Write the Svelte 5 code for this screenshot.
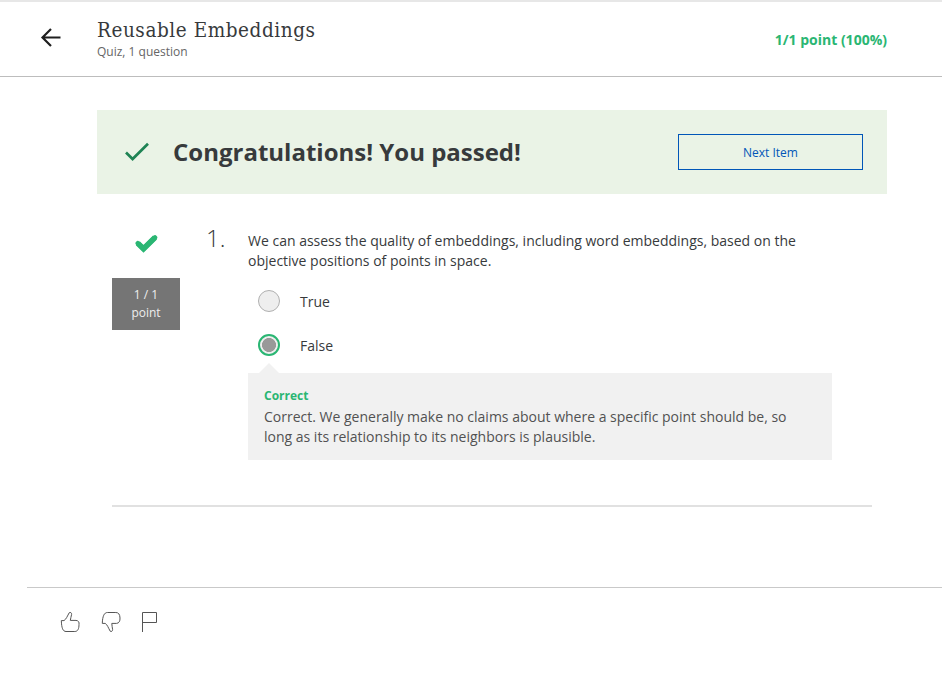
<script>
  const options = [
    { label: 'True', checked: false },
    { label: 'False', checked: true }
  ];
</script>

<div class="page">
  <header>
    <svg class="back" width="22" height="22" viewBox="0 0 22 22" aria-label="Back">
      <path d="M11 3 2.5 11.5 11 20M3 11.5H20.5" fill="none" stroke="#1f1f1f" stroke-width="2.2" />
    </svg>
    <div class="heading">
      <h1>Reusable Embeddings</h1>
      <p>Quiz, 1 question</p>
    </div>
    <strong class="score">1/1 point (100%)</strong>
  </header>

  <section class="banner">
    <svg width="26" height="22" viewBox="0 0 26 22">
      <path d="M2 11.5 8.6 18 24 2.8" fill="none" stroke="#1f8354" stroke-width="2.7" />
    </svg>
    <h2>Congratulations! You passed!</h2>
    <button>Next Item</button>
  </section>

  <section class="question">
    <div class="grade">
      <svg width="24" height="20" viewBox="0 0 24 20">
        <path d="M3.8 10.3 9.5 15.8 21 4.5" fill="none" stroke="#2ab673" stroke-width="5.6" />
        <path d="M3.8 10.3 9.5 15.8 21 4.5" fill="none" stroke="#2ab673" stroke-width="4.6" stroke-linejoin="round" stroke-linecap="round" />
      </svg>
      <div class="points">1 / 1<br />point</div>
    </div>
    <div class="number">1.</div>
    <div class="body">
      <p class="prompt">We can assess the quality of embeddings, including word embeddings, based on the<br />objective positions of points in space.</p>
      {#each options as option}
        <div class="option">
          <span class="radio" class:checked={option.checked}></span>
          <span class="label">{option.label}</span>
        </div>
      {/each}
      <div class="feedback">
        <strong>Correct</strong>
        <p>Correct. We generally make no claims about where a specific point should be, so<br />long as its relationship to its neighbors is plausible.</p>
      </div>
    </div>
  </section>

  <footer>
    <svg width="20" height="22" viewBox="0 0 20 22">
      <path d="M1.3 9.6H4C6 8.6 7.6 4.6 9.2 1.8C10.2 .8 11.7 1.6 11.6 3.4C11.4 5.6 10.3 7.6 10.3 9.4H16C18.4 9.6 19.4 11.2 19 13.4C19 17.8 17.8 20.5 14.8 20.5H6C2.8 20.5 1.6 16.8 1.3 9.6Z" />
    </svg>
    <svg width="20" height="22" viewBox="0 0 20 22">
      <path d="M1.3 12.4H4.2C6.2 13.4 7.4 17 9.2 20.2C10.2 21 11.7 20.2 11.6 18.6C11.6 16.4 10.6 14.6 10.8 12.4H15.5C18 12.2 19.2 10.2 19 7C18.9 3.2 17.4 1.5 14.8 1.5H6.4C3.2 1.5 1.5 5.2 1.3 12.4Z" />
    </svg>
    <svg width="18" height="22" viewBox="0 0 18 22">
      <path d="M2.5 21V1.5H16.5V11.5H2.5" />
    </svg>
  </footer>
</div>

<style>
  :global(body) {
    background: #fff;
  }
  .page {
    box-sizing: border-box;
    height: 676px;
    overflow: hidden;
    font: 14px/20px "Open Sans", sans-serif;
    color: #373a3c;
  }
  h1, h2, p {
    margin: 0;
  }
  header {
    box-sizing: border-box;
    height: 77px;
    display: flex;
    align-items: flex-start;
    padding: 0 55px 0 40px;
    border-top: 2px solid #e7e7e7;
    border-bottom: 1px solid #bdbdbd;
  }
  .back {
    margin-top: 24px;
  }
  .heading {
    flex: 1;
    padding: 16px 0 0 35px;
  }
  h1 {
    font: 400 20.5px/24px "DejaVu Serif Condensed", "DejaVu Serif", serif;
    font-stretch: condensed;
    letter-spacing: 0.56px;
    white-space: nowrap;
  }
  .heading p {
    padding-top: 1px;
    font-size: 12px;
    line-height: 18px;
    color: #666;
  }
  .score {
    margin-top: 28px;
    color: #2ab673;
  }
  .banner {
    box-sizing: border-box;
    width: 790px;
    height: 84px;
    margin: 33px 0 0 97px;
    padding: 0 24px 0 27px;
    display: flex;
    align-items: center;
    background: #eaf3e6;
  }
  h2 {
    flex: 1;
    padding-left: 23px;
    font-size: 24px;
    line-height: 32px;
    font-weight: 700;
  }
  button {
    width: 185px;
    height: 36px;
    padding: 2px 0 0;
    border: 1px solid #0156b8;
    background: none;
    color: #0156b8;
    font: 12px/18px "Open Sans", sans-serif;
  }
  .question {
    box-sizing: border-box;
    width: 760px;
    height: 313px;
    margin-left: 112px;
    padding-top: 37px;
    display: flex;
    border-bottom: 2px solid #e1e1e1;
  }
  .grade {
    width: 68px;
    display: flex;
    flex-direction: column;
    align-items: center;
  }
  .grade svg {
    margin-top: 2px;
  }
  .points {
    box-sizing: border-box;
    width: 68px;
    height: 52px;
    margin-top: 25px;
    padding-top: 8px;
    background: #757575;
    color: #eee;
    font-size: 12px;
    line-height: 18px;
    text-align: center;
  }
  .number {
    width: 68px;
    padding-left: 26px;
    box-sizing: border-box;
    font-size: 24px;
    line-height: 14px;
    font-weight: 300;
  }
  .body {
    width: 584px;
  }
  .prompt {
    white-space: nowrap;
    margin-bottom: 8px;
  }
  .option {
    height: 44px;
    padding-left: 10px;
    display: flex;
    align-items: center;
    gap: 20px;
  }
  .label {
    padding-top: 2px;
  }
  .radio {
    box-sizing: border-box;
    width: 22px;
    height: 22px;
    border: 1px solid #b0b0b0;
    border-radius: 50%;
    background: #eee;
  }
  .radio.checked {
    border: 2px solid #2ab673;
    background: radial-gradient(circle, #999 6.7px, #eee 7.3px);
  }
  .feedback {
    position: relative;
    box-sizing: border-box;
    height: 87px;
    margin-top: 6px;
    padding: 13px 16px 0;
    background: #f1f1f1;
    color: #525252;
    white-space: nowrap;
  }
  .feedback::before {
    content: "";
    position: absolute;
    left: 11px;
    top: -10px;
    border: 10px solid transparent;
    border-top: 0;
    border-bottom-color: #f1f1f1;
  }
  .feedback strong {
    display: block;
    margin-bottom: 1px;
    font-size: 12px;
    color: #2ab673;
  }
  footer {
    margin: 80px 0 0 27px;
    padding: 23px 0 0 33px;
    display: flex;
    border-top: 1px solid #c9c9c9;
  }
  footer svg {
    margin-right: 21px;
    fill: none;
    stroke: #555;
    stroke-width: 1;
  }
  footer svg:nth-child(2) {
    margin-right: 19px;
  }
</style>
